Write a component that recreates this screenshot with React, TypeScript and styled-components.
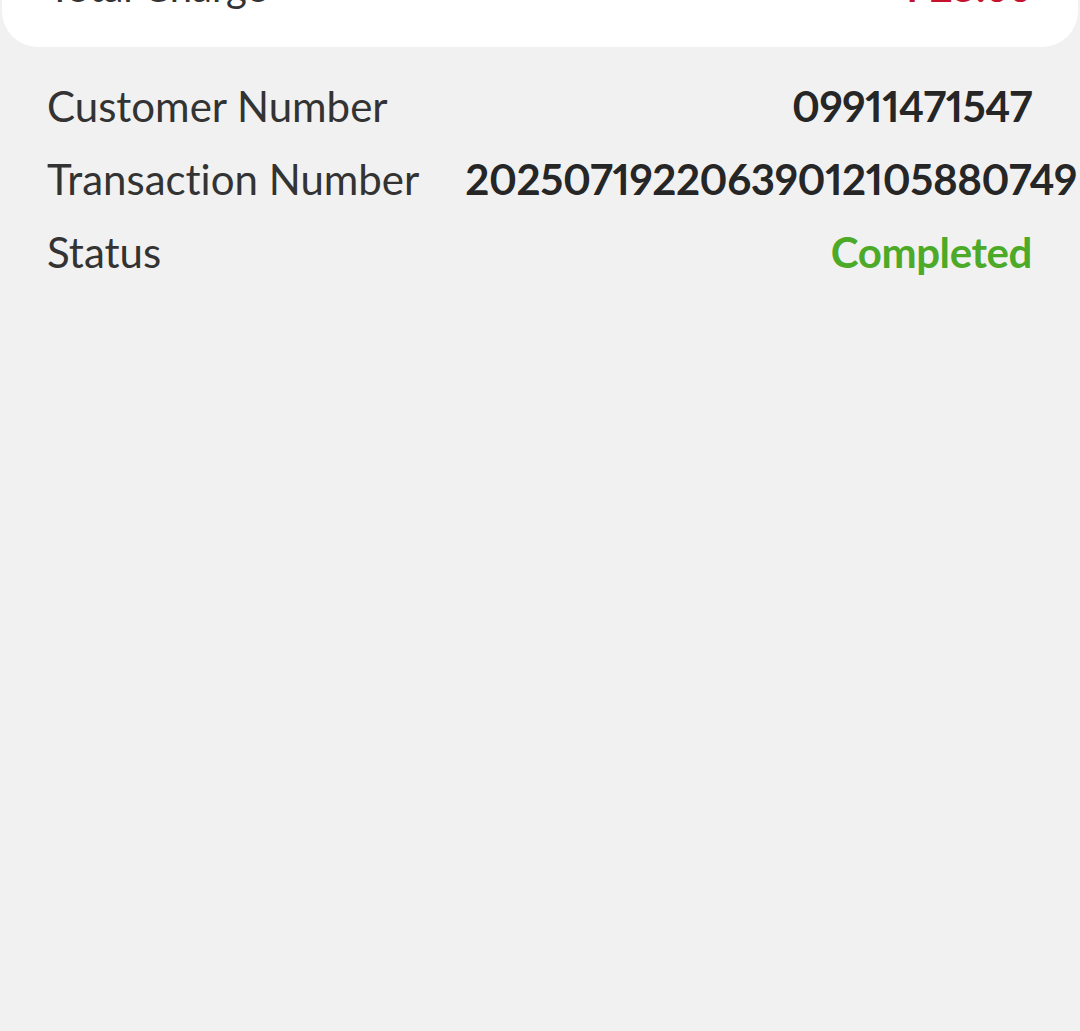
import React from 'react';
import styled, { createGlobalStyle } from 'styled-components';

const GlobalStyle = createGlobalStyle`
    html, body {
        margin: 0;
        padding: 0;
        background: #f1f1f1;
    }
    body {
        font-family: Lato, "Noto Sans", sans-serif;
        font-variant-ligatures: none;
        overflow: hidden;
    }
`

const Page = styled.div`
    width: 1080px;
    height: 1031px;
    background: #f1f1f1;
    overflow: hidden;
`

const SummaryCard = styled.div`
    margin: -40px 2px 0;
    padding: 0 46px 0 46px;
    height: 87px;
    background: #ffffff;
    border-radius: 0 0 36px 36px;
    display: flex;
    align-items: flex-start;
    justify-content: space-between;
`

const CardLabel = styled.span`
    font-size: 40px;
    line-height: 55px;
    color: #333333;
`

const CardAmount = styled.span`
    font-size: 40px;
    line-height: 55px;
    font-weight: 700;
    color: #c4122f;
`

const Details = styled.div`
    padding: 33px 48px 0 47px;
    display: flex;
    flex-direction: column;
    gap: 20px;
`

const Row = styled.div`
    display: flex;
    justify-content: space-between;
    align-items: baseline;
    gap: 46px;
    white-space: nowrap;
`

const Label = styled.span`
    font-size: 42px;
    line-height: 53px;
    color: #333333;
`

const Value = styled.span<{ tone?: 'green' }>`
    font-size: 42px;
    line-height: 53px;
    font-weight: 700;
    letter-spacing: -0.4px;
    font-variant-numeric: proportional-nums;
    color: ${({ tone }) => (tone === 'green' ? '#4caa28' : '#262626')};
`

const details = [
    { label: 'Customer Number', value: '09911471547' },
    { label: 'Transaction Number', value: '20250719220639012105880749' },
    { label: 'Status', value: 'Completed', tone: 'green' as const },
]

const App = () => {
    return (
        <Page>
            <GlobalStyle />
            <SummaryCard>
                <CardLabel>Total Charge</CardLabel>
                <CardAmount>₱25.00</CardAmount>
            </SummaryCard>
            <Details>
                {details.map((d) => (
                    <Row key={d.label}>
                        <Label>{d.label}</Label>
                        <Value tone={d.tone}>{d.value}</Value>
                    </Row>
                ))}
            </Details>
        </Page>
    )
}

export default App;
